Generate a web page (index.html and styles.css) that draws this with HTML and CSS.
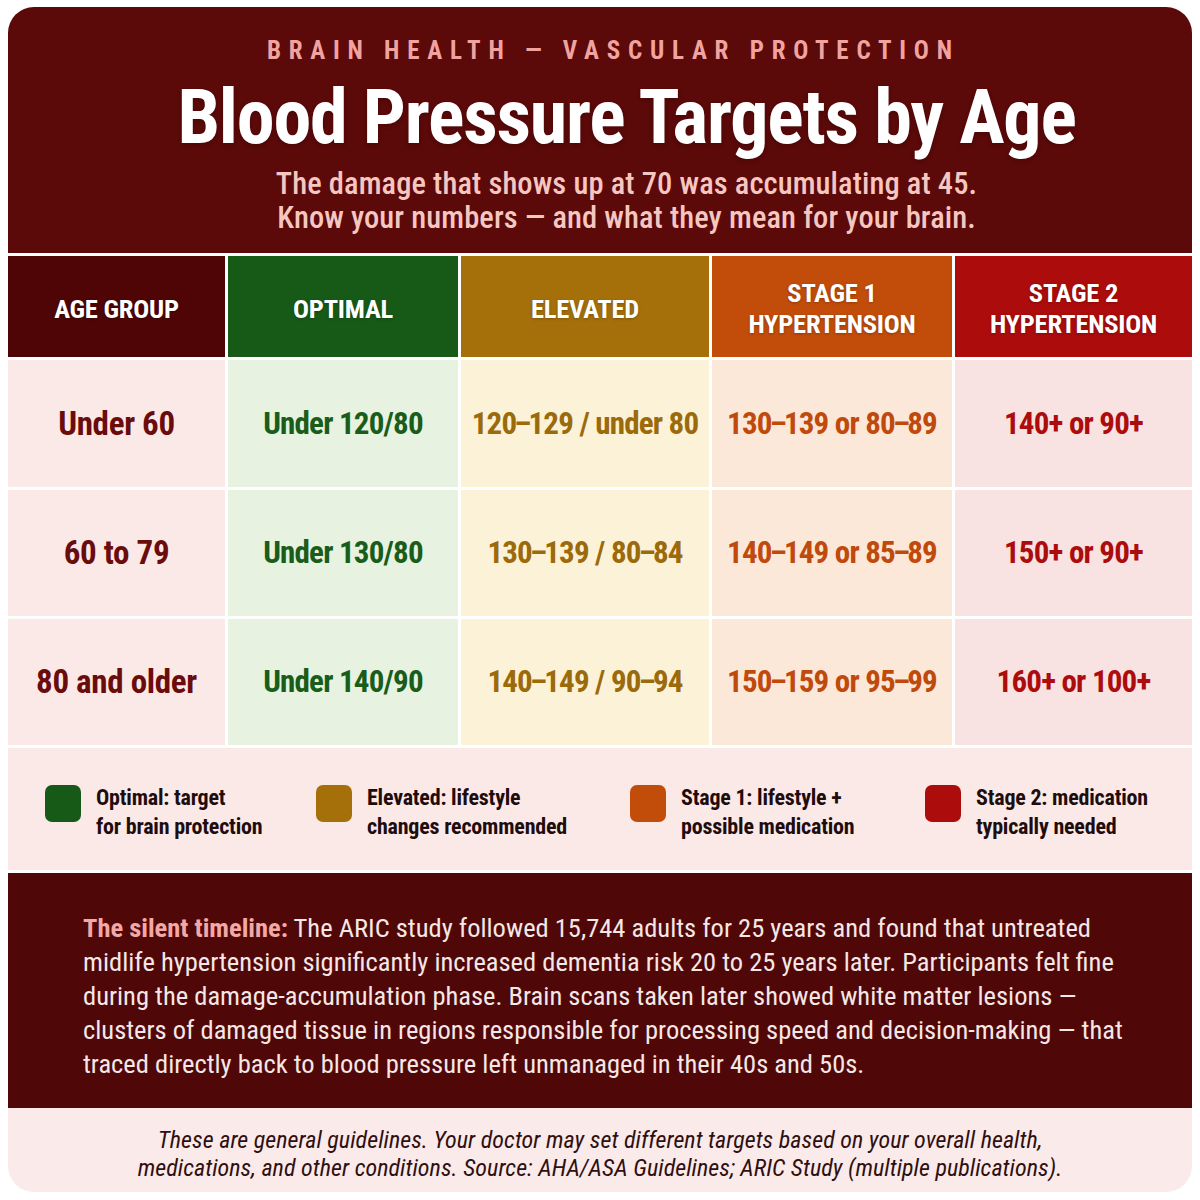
FILE: index.html
```html
<!DOCTYPE html>
<html lang="en">
<head>
<meta charset="utf-8">
<title>Blood Pressure Targets by Age</title>
<link rel="stylesheet" href="styles.css">
</head>
<body>
<div class="card">
  <header class="hero">
    <div class="eyebrow">BRAIN HEALTH — VASCULAR PROTECTION</div>
    <h1 class="title">Blood Pressure Targets by Age</h1>
    <p class="subtitle">The damage that shows up at 70 was accumulating at 45.<br>Know your numbers — and what they mean for your brain.</p>
  </header>

  <div class="table">
    <div class="th th-age">AGE GROUP</div>
    <div class="th th-opt">OPTIMAL</div>
    <div class="th th-elev">ELEVATED</div>
    <div class="th th-s1">STAGE 1<br>HYPERTENSION</div>
    <div class="th th-s2">STAGE 2<br>HYPERTENSION</div>

    <div class="td td-age">Under 60</div>
    <div class="td td-opt">Under 120/80</div>
    <div class="td td-elev">120<span class="dash">–</span>129 / under 80</div>
    <div class="td td-s1">130<span class="dash">–</span>139 or 80<span class="dash">–</span>89</div>
    <div class="td td-s2">140+ or 90+</div>

    <div class="td td-age">60 to 79</div>
    <div class="td td-opt">Under 130/80</div>
    <div class="td td-elev">130<span class="dash">–</span>139 / 80<span class="dash">–</span>84</div>
    <div class="td td-s1">140<span class="dash">–</span>149 or 85<span class="dash">–</span>89</div>
    <div class="td td-s2">150+ or 90+</div>

    <div class="td td-age">80 and older</div>
    <div class="td td-opt">Under 140/90</div>
    <div class="td td-elev">140<span class="dash">–</span>149 / 90<span class="dash">–</span>94</div>
    <div class="td td-s1">150<span class="dash">–</span>159 or 95<span class="dash">–</span>99</div>
    <div class="td td-s2">160+ or 100+</div>
  </div>

  <div class="legend">
    <div class="legend-item"><span class="swatch sw-opt"></span><span class="legend-text">Optimal: target<br>for brain protection</span></div>
    <div class="legend-item"><span class="swatch sw-elev"></span><span class="legend-text">Elevated: lifestyle<br>changes recommended</span></div>
    <div class="legend-item"><span class="swatch sw-s1"></span><span class="legend-text">Stage 1: lifestyle +<br>possible medication</span></div>
    <div class="legend-item"><span class="swatch sw-s2"></span><span class="legend-text">Stage 2: medication<br>typically needed</span></div>
  </div>

  <section class="timeline">
    <p><strong class="lead">The silent timeline:</strong> The ARIC study followed 15,744 adults for 25 years and found that untreated<br>midlife hypertension significantly increased dementia risk 20 to 25 years later. Participants felt fine<br>during the damage-accumulation phase. Brain scans taken later showed white matter lesions —<br>clusters of damaged tissue in regions responsible for processing speed and decision-making — that<br>traced directly back to blood pressure left unmanaged in their 40s and 50s.</p>
  </section>

  <footer class="footnote">
    <p>These are general guidelines. Your doctor may set different targets based on your overall health,<br>medications, and other conditions. Source: AHA/ASA Guidelines; ARIC Study (multiple publications).</p>
  </footer>
</div>
</body>
</html>
```

FILE: styles.css
```css
* { box-sizing: border-box; }

html, body {
  margin: 0;
  padding: 0;
  background: #ffffff;
}

body {
  font-family: "Roboto Condensed", "Liberation Sans Narrow", "DejaVu Sans Condensed", Roboto, sans-serif;
  font-stretch: condensed;
  width: 1200px;
  height: 1200px;
}

.card {
  margin: 7px 8px 0 8px;
  width: 1184px;
  height: 1185px;
  border-radius: 26px;
  overflow: hidden;
  background: #ffffff;
  display: flex;
  flex-direction: column;
}

/* ---------- header ---------- */
.hero {
  background: #5b0909;
  height: 246px;
  text-align: center;
  padding: 30px 0 0 53px;
  flex: none;
}

.eyebrow {
  color: #f1a3a0;
  font-weight: 700;
  font-size: 25px;
  letter-spacing: 0.31em;
  line-height: 28px;
  padding-left: 0.31em;
  margin-left: -34px;
}

.title {
  margin: 12px 0 0 0;
  color: #ffffff;
  font-weight: 700;
  font-size: 76px;
  line-height: 80px;
  letter-spacing: -1.2px;
  text-shadow: 0 2px 4px rgba(0, 0, 0, 0.2);
}

.subtitle {
  margin: 10px 0 0 0;
  color: #f6c6c1;
  font-weight: 500;
  font-size: 30.5px;
  line-height: 34px;
  letter-spacing: 0.1px;
}

/* ---------- table ---------- */
.table {
  margin-top: 3px;
  display: grid;
  grid-template-columns: 217px 230px 248px 240px 1fr;
  grid-template-rows: 101px 127px 126px 126px;
  gap: 3px;
  flex: none;
}

.th, .td {
  display: flex;
  align-items: center;
  justify-content: center;
  text-align: center;
  font-weight: 700;
}

.th {
  color: #ffffff;
  font-size: 26.5px;
  line-height: 31px;
  letter-spacing: -0.2px;
  padding-top: 3px;
  text-shadow: 0 1px 3px rgba(0, 0, 0, 0.25);
}

.th-age { background: #4f0505; }
.th-opt { background: #175a17; }
.th-elev { background: #a5700a; }
.th-s1 { background: #c24d0b; }
.th-s2 { background: #ad0c0c; }

.td {
  font-size: 31px;
  line-height: 36px;
  letter-spacing: -0.8px;
  white-space: nowrap;
}

.dash {
  margin: 0 -2px;
}

.td-age { background: #fbe9e7; color: #6a0c0c; font-size: 33px; letter-spacing: -0.3px; }
.td-opt { background: #e7f2e1; color: #1a5d1a; }
.td-elev { background: #fcf2d8; color: #9b6a0b; }
.td-s1 { background: #fbe8d9; color: #c04a0c; }
.td-s2 { background: #f9e2e2; color: #ad0c0c; }

/* ---------- legend ---------- */
.legend {
  margin-top: 3px;
  height: 122px;
  background: #fbe9e8;
  display: grid;
  grid-template-columns: 271px 314px 295px 1fr;
  align-items: center;
  padding: 6px 0 0 37px;
  flex: none;
}

.legend-item {
  display: flex;
  align-items: flex-start;
  gap: 15px;
}

.swatch {
  width: 36px;
  height: 37px;
  border-radius: 7px;
  margin-top: 2px;
  flex: none;
}

.sw-opt { background: #175a17; }
.sw-elev { background: #a5700a; }
.sw-s1 { background: #c24d0b; }
.sw-s2 { background: #ad0c0c; }

.legend-text {
  color: #1f0d0d;
  font-weight: 700;
  font-size: 22px;
  line-height: 29px;
  letter-spacing: -0.2px;
}

/* ---------- timeline ---------- */
.timeline {
  margin-top: 3px;
  height: 235px;
  background: #4f0707;
  display: flex;
  align-items: center;
  padding: 10px 20px 0 75px;
  flex: none;
}

.timeline p {
  margin: 0;
  color: #f5e7e6;
  font-size: 26.5px;
  line-height: 34px;
  font-weight: 400;
  white-space: nowrap;
}

.lead {
  color: #f3a8a5;
  font-weight: 700;
}

/* ---------- footnote ---------- */
.footnote {
  flex: 1;
  background: #fbeaea;
  display: flex;
  align-items: center;
  justify-content: center;
  text-align: center;
  padding-top: 8px;
}

.footnote p {
  margin: 0;
  color: #2e1010;
  font-style: italic;
  font-size: 24px;
  line-height: 28px;
  letter-spacing: 0.05px;
  white-space: nowrap;
}
```
